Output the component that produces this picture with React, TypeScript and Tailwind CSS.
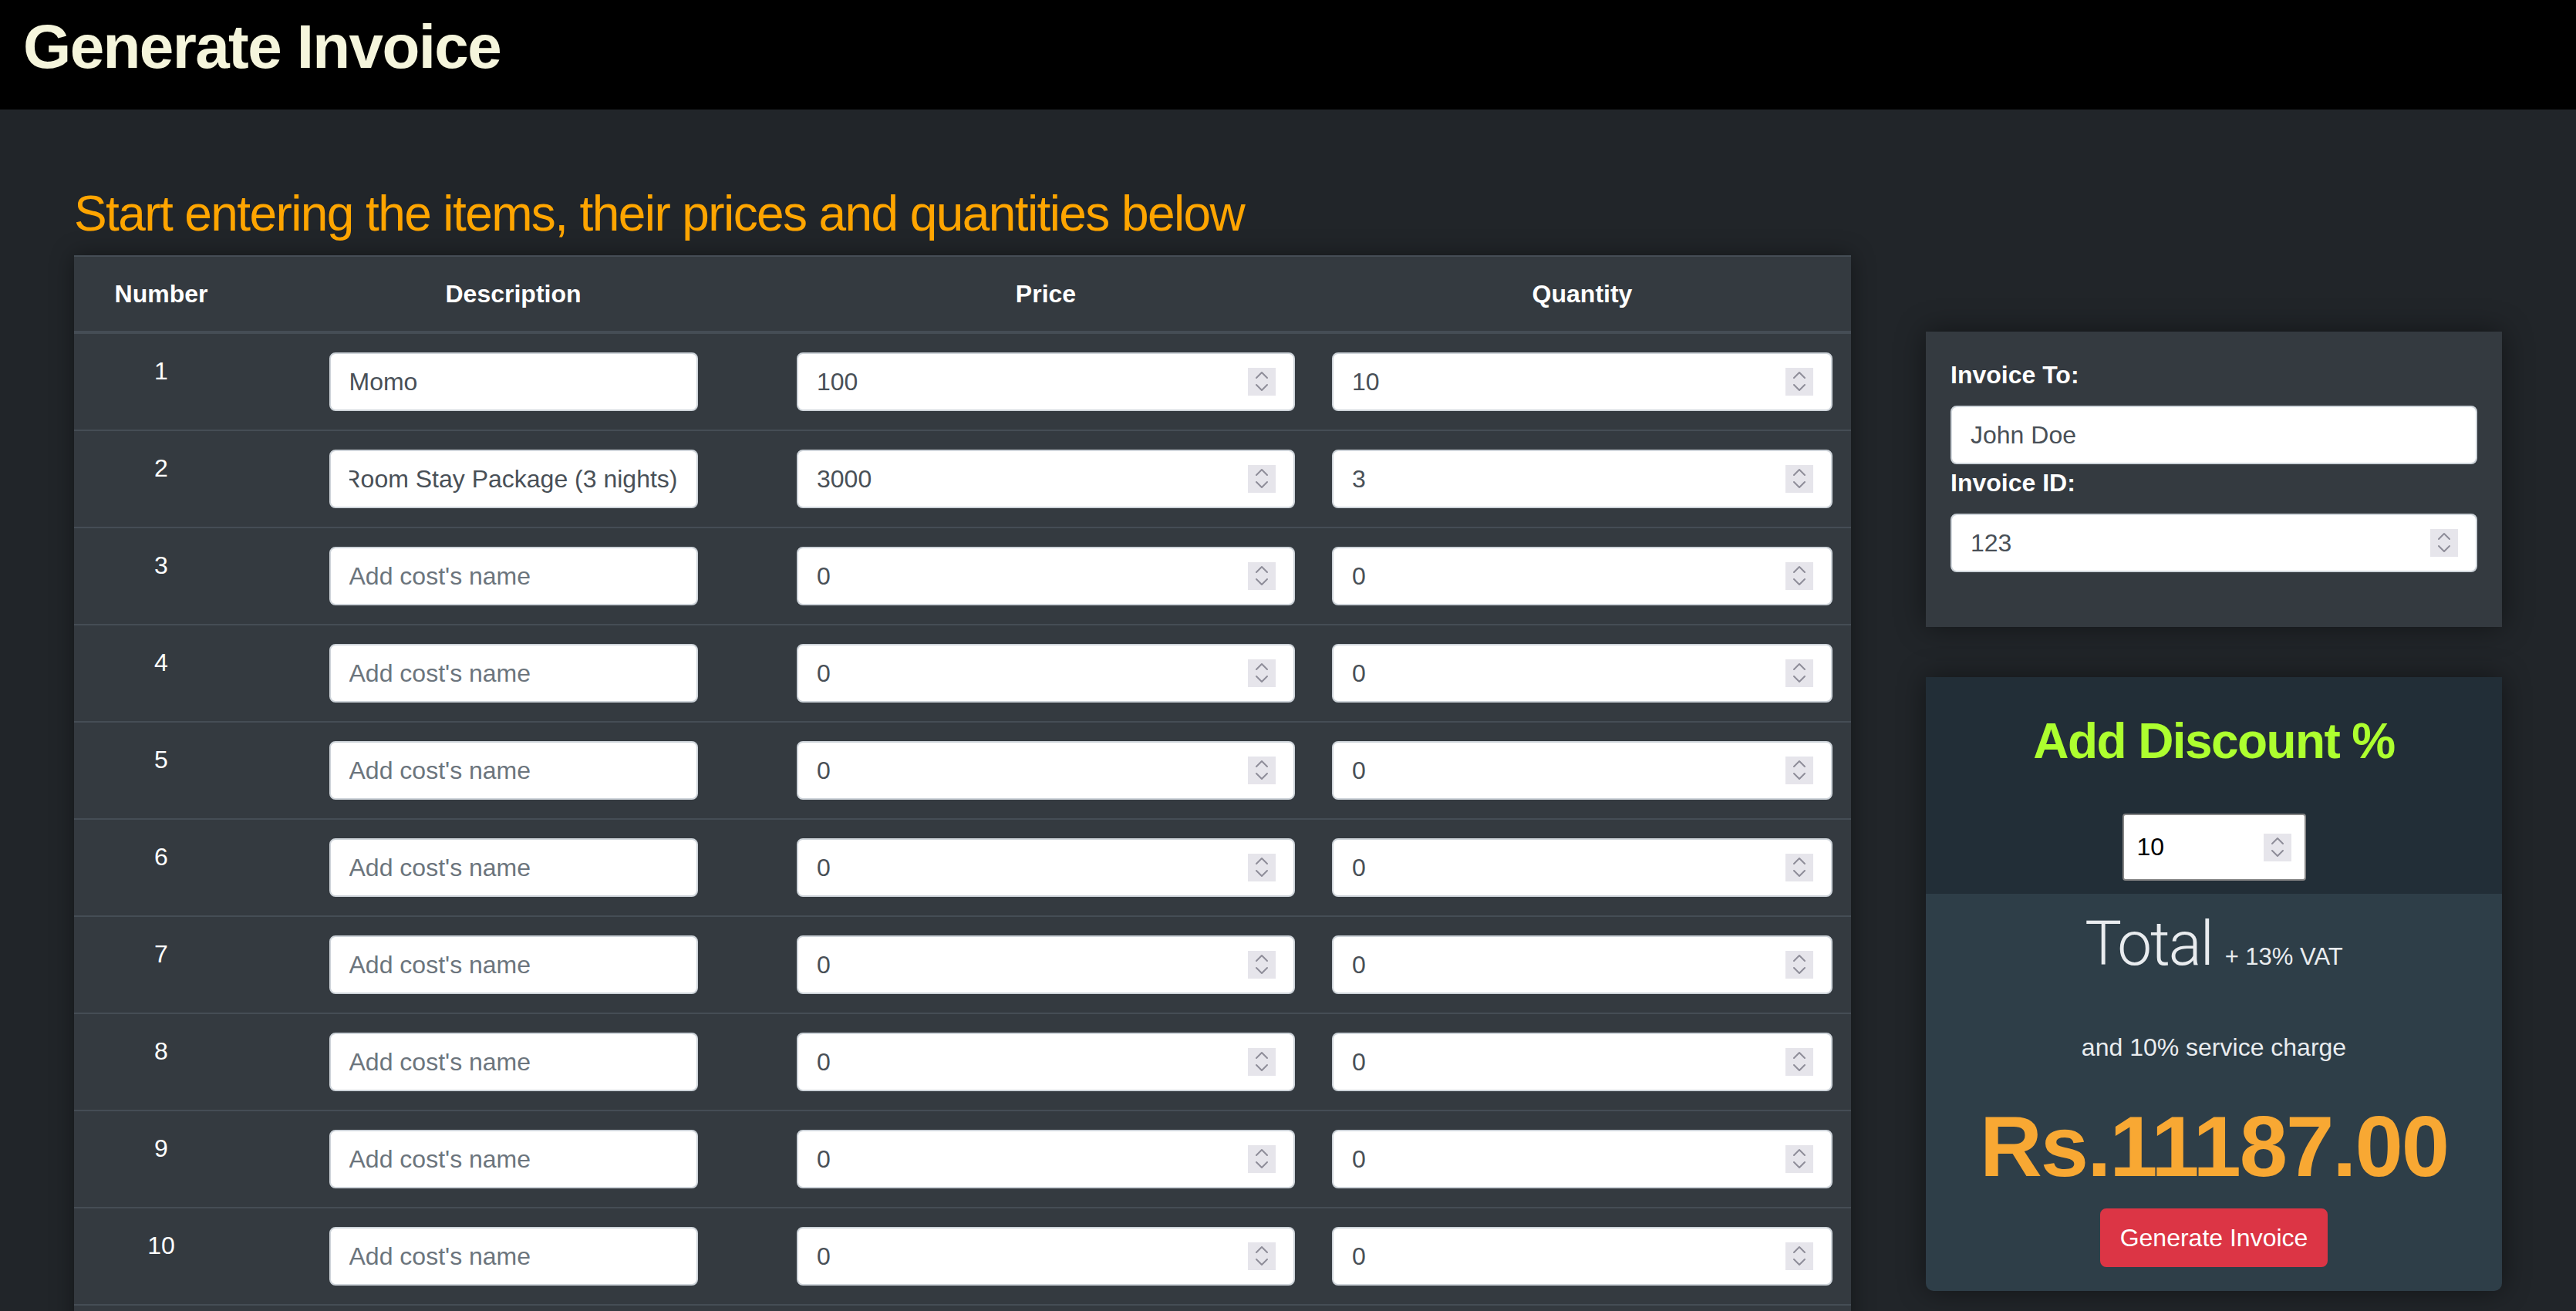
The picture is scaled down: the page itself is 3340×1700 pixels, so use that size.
import { useEffect, useRef } from 'react';

interface LineItem {
    description: string;
    price: string;
    quantity: string;
}

const items: LineItem[] = [
    { description: 'Momo', price: '100', quantity: '10' },
    { description: 'Room Stay Package (3 nights)', price: '3000', quantity: '3' },
    ...Array.from({ length: 8 }, () => ({ description: '', price: '0', quantity: '0' })),
];

function Spinner({ className = '' }: { className?: string }) {
    return (
        <span
            className={`pointer-events-none absolute top-1/2 h-[36px] w-[36px] -translate-y-1/2 bg-[#e6e5eb] ${className}`}
        >
            <svg viewBox="0 0 36 36" className="h-full w-full" fill="none" stroke="#8e8d99" strokeWidth="2" strokeLinecap="round" strokeLinejoin="round">
                <path d="M11 13 L18 6 L25 13" />
                <path d="M11 22 L18 29 L25 22" />
            </svg>
        </span>
    );
}

function Field({ value, placeholder, number, scrollEnd }: { value?: string; placeholder?: string; number?: boolean; scrollEnd?: boolean }) {
    const ref = useRef<HTMLInputElement>(null);

    useEffect(() => {
        // long names show their end, like a caret left at the end
        if (scrollEnd && ref.current) ref.current.scrollLeft = ref.current.scrollWidth;
    }, [scrollEnd]);

    return (
        <div className="relative w-full">
            <input
                ref={ref}
                type="text"
                defaultValue={value}
                placeholder={placeholder}
                className="block h-[76px] w-full rounded-[8px] border-2 border-[#ced4da] bg-white px-[24px] text-[32px] text-[#495057] outline-none placeholder:text-[#6c757d]"
            />
            {number && <Spinner className="right-[25px]" />}
        </div>
    );
}

export default function App() {
    return (
        <div className="h-[1700px] w-[3340px] overflow-hidden bg-[#212529] font-['Liberation_Sans',Arial,sans-serif]">
            {/* Header */}
            <header className="h-[142px] bg-black pl-[30px] pt-[13px]">
                <h1 className="text-[80px] font-bold leading-[96px] tracking-[-1.6px] text-[#f5f5dc]">Generate Invoice</h1>
            </header>

            <main className="flex gap-[97px] px-[96px] pt-[97px]">
                {/* Items */}
                <section className="w-[2304px] shrink-0">
                    <h2 className="mb-[15px] text-[64px] leading-[77px] tracking-[-1.6px] text-[#ffa500]">
                        Start entering the items, their prices and quantities below
                    </h2>

                    <div className="bg-[#343a40] pb-[60px] shadow-[0_0_28px_rgba(0,0,0,0.4)]">
                        <table className="w-[2304px] table-fixed border-separate border-spacing-0 text-[32px] text-white">
                            <colgroup>
                                <col className="w-[226px]" />
                                <col className="w-[687px]" />
                                <col className="w-[694px]" />
                                <col className="w-[697px]" />
                            </colgroup>
                            <thead>
                                <tr>
                                    {['Number', 'Description', 'Price', 'Quantity'].map((h) => (
                                        <th
                                            key={h}
                                            className="border-t-2 border-b-4 border-[#454d55] px-[24px] py-[24px] text-center align-top font-bold leading-[48px]"
                                        >
                                            {h}
                                        </th>
                                    ))}
                                </tr>
                            </thead>
                            <tbody>
                                {items.map((item, i) => (
                                    <tr key={i}>
                                        <td className={`${i === 0 ? 'border-t-0' : 'border-t-2'} border-b-0 border-[#454d55] px-[24px] py-[24px] text-center align-top leading-[48px] [tr:last-child>&]:border-b-2`}>
                                            {i + 1}
                                        </td>
                                        <td className={`${i === 0 ? 'border-t-0' : 'border-t-2'} border-b-0 border-[#454d55] px-[24px] py-[24px] align-top [tr:last-child>&]:border-b-2`}>
                                            <div className="mx-auto w-[478px]">
                                                <Field
                                                    value={item.description || undefined}
                                                    placeholder="Add cost's name"
                                                    scrollEnd={item.description.length > 20}
                                                />
                                            </div>
                                        </td>
                                        <td className={`${i === 0 ? 'border-t-0' : 'border-t-2'} border-b-0 border-[#454d55] px-[24px] py-[24px] align-top [tr:last-child>&]:border-b-2`}>
                                            <Field value={item.price} number />
                                        </td>
                                        <td className={`${i === 0 ? 'border-t-0' : 'border-t-2'} border-b-0 border-[#454d55] px-[24px] py-[24px] align-top [tr:last-child>&]:border-b-2`}>
                                            <Field value={item.quantity} number />
                                        </td>
                                    </tr>
                                ))}
                            </tbody>
                        </table>
                    </div>
                </section>

                {/* Side panel */}
                <aside className="mt-[191px] w-[747px] shrink-0">
                    <div className="bg-[#343a40] px-[32px] pt-[32px] pb-[71px] shadow-[0_0_36px_rgba(0,0,0,0.45)]">
                        <label className="mb-[16px] block text-[32px] font-bold leading-[48px] text-white">Invoice To:</label>
                        <Field value="John Doe" />
                        <label className="mb-[16px] block text-[32px] font-bold leading-[48px] text-white">Invoice ID:</label>
                        <Field value="123" number />
                    </div>

                    <div className="mt-[65px] rounded-b-[10px] shadow-[0_0_36px_rgba(0,0,0,0.45)]">
                        <div className="flex flex-col items-center bg-[#222e37] pt-[45px] pb-[17px]">
                            <h2 className="text-[64px] font-bold leading-[77px] tracking-[-1.6px] text-[#adff2f]">Add Discount %</h2>
                            <div className="relative mt-[55px] w-[238px]">
                                <input
                                    type="text"
                                    defaultValue="10"
                                    className="block h-[87px] w-full rounded-[4px] border-2 border-[#858585] bg-white px-[17px] text-[32px] text-black outline-none"
                                />
                                <Spinner className="right-[19px]" />
                            </div>
                        </div>

                        <div className="flex flex-col items-center rounded-b-[10px] bg-[#2e3e48] pt-[17px] pb-[31px] text-[#e9ecef]">
                            <div className="h-[96px] text-[80px] leading-[96px]">
                                <span className="font-['Roboto',sans-serif] font-light tracking-[-2px]">Total</span>
                                <span className="ml-[16px] text-[31px]">+ 13% VAT</span>
                            </div>
                            <p className="mt-[62px] text-[32px] leading-[48px]">and 10% service charge</p>
                            <p className="mt-[38px] text-[112px] font-bold leading-[134px] tracking-[-2px] text-[#f8a833]">Rs.11187.00</p>
                            <button className="mt-[13px] h-[76px] rounded-[8px] border-2 border-[#dc3545] bg-[#dc3545] px-[24px] text-[32px] text-white">
                                Generate Invoice
                            </button>
                        </div>
                    </div>
                </aside>
            </main>
        </div>
    );
}
